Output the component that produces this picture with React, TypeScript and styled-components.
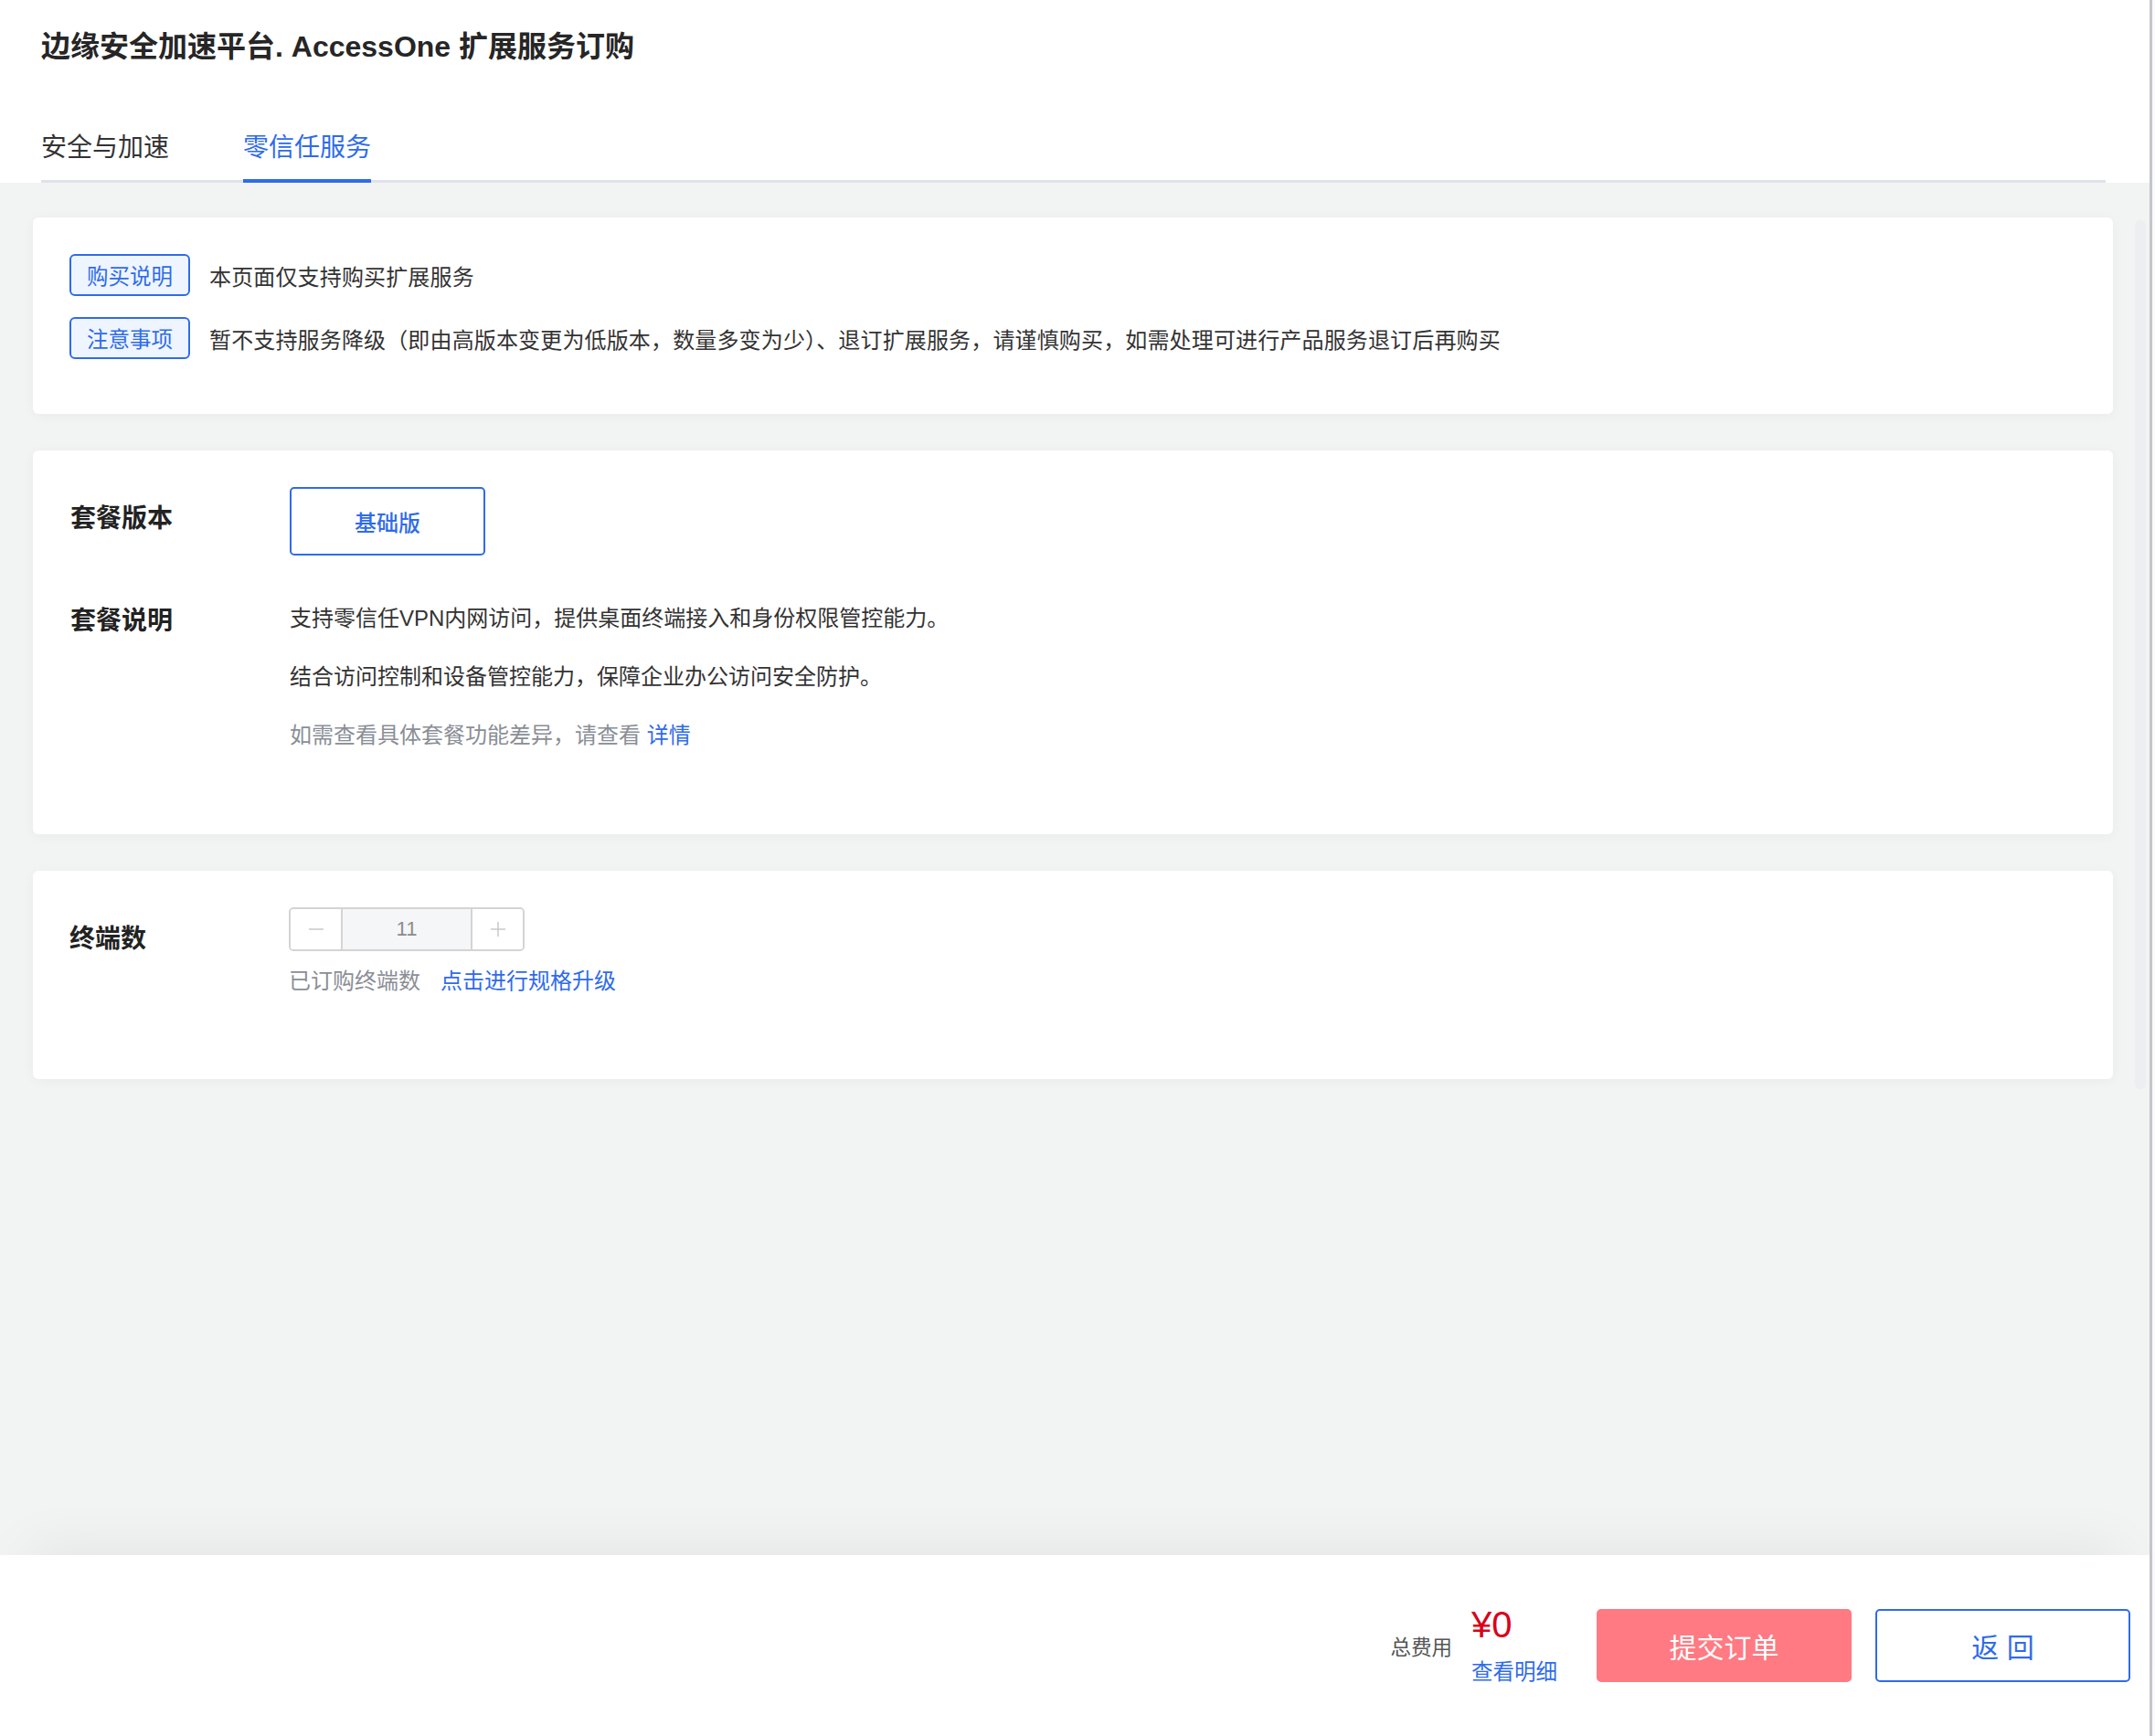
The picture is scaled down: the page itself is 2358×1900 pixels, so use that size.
import React from "react";
import styled, { createGlobalStyle } from "styled-components";

const BLUE = "#2f6bea";

const GlobalStyle = createGlobalStyle`
  body {
    margin: 0;
    background: #ffffff;
    font-family: "Liberation Sans", "Noto Sans CJK SC", sans-serif;
    color: #333333;
  }
`;

const Page = styled.div`
  display: flex;
  min-height: 1900px;
`;

const Main = styled.div`
  position: relative;
  flex: 1;

  display: flex;
  flex-direction: column;
`;

const WindowEdge = styled.div`
  width: 3px;
  border-left: 3px solid #c4c6cb;
  background: #fafafa;
`;

const Header = styled.header`
  background: #ffffff;
  padding: 31px 48px 0 45px;
`;

const Title = styled.h1`
  margin: 0;

  font-size: 32px;
  line-height: 40px;
  font-weight: 700;
  color: #262626;
`;

const TabBar = styled.div`
  margin-top: 71px;

  display: flex;
  gap: 81px;

  border-bottom: 3px solid #dfe2ea;
`;

const Tab = styled.div<{ $active?: boolean }>`
  margin-bottom: -3px;
  padding-bottom: 14px;

  font-size: 28px;
  line-height: 40px;
  color: ${(p) => (p.$active ? BLUE : "#333333")};

  border-bottom: 4px solid ${(p) => (p.$active ? BLUE : "transparent")};
`;

const Content = styled.main`
  flex: 1;
  background: #f2f3f3;

  padding: 38px 40px 0 36px;

  display: flex;
  flex-direction: column;
  gap: 40px;
`;

const Card = styled.section<{ $pad: string }>`
  background: #ffffff;
  border-radius: 6px;
  box-shadow: 0 2px 14px rgba(0, 0, 0, 0.04);

  padding: ${(p) => p.$pad};
`;

const NoticeList = styled.div`
  display: flex;
  flex-direction: column;
  gap: 23px;
`;

const NoticeRow = styled.div`
  display: flex;
  align-items: center;
  gap: 21px;
`;

const Tag = styled.span`
  height: 46px;
  box-sizing: border-box;
  padding: 0 17px;

  display: inline-flex;
  align-items: center;

  font-size: 23.5px;
  color: ${BLUE};
  background: #eef5ff;

  border: 2px solid ${BLUE};
  border-radius: 6px;
`;

const NoticeText = styled.span`
  font-size: 24px;
  letter-spacing: 0.15px;
  color: #333333;
`;

const FieldList = styled.div<{ $gap: number }>`
  display: flex;
  flex-direction: column;
  gap: ${(p) => p.$gap}px;
`;

const FieldRow = styled.div`
  display: grid;
  grid-template-columns: 240px 1fr;
  align-items: start;
`;

const Label = styled.div`
  padding-top: 3px;

  font-size: 28px;
  line-height: 64px;
  font-weight: 700;
  color: #222222;
`;

const VersionButton = styled.button`
  width: 214px;
  height: 75px;

  background: #ffffff;
  border: 2px solid ${BLUE};
  border-radius: 5px;

  font-family: inherit;
  font-size: 24px;
  font-weight: 500;
  color: ${BLUE};
`;

const DescLine = styled.p<{ $muted?: boolean }>`
  margin: 0;

  font-size: 24px;
  line-height: 64px;
  color: ${(p) => (p.$muted ? "#8a8e96" : "#333333")};
`;

const Link = styled.a`
  color: ${BLUE};
  text-decoration: none;
`;

const Stepper = styled.div`
  width: 258px;
  height: 48px;
  box-sizing: border-box;

  display: grid;
  grid-template-columns: 55px 1fr 55px;

  border: 2px solid #d4d4d4;
  border-radius: 5px;
  overflow: hidden;
`;

const StepButton = styled.div`
  display: flex;
  align-items: center;
  justify-content: center;
  background: #ffffff;
`;

const StepValue = styled.div`
  display: flex;
  align-items: center;
  justify-content: center;

  background: #f5f6f7;
  border-left: 2px solid #d4d4d4;
  border-right: 2px solid #d4d4d4;

  font-size: 22px;
  color: #8c8c8c;
`;

const SubLine = styled.div`
  margin-top: 15px;

  font-size: 24px;
  line-height: 36px;
  color: #8a8e96;

  display: flex;
  gap: 22px;
`;

const ScrollThumb = styled.div`
  position: absolute;
  top: 241px;
  right: 4px;

  width: 12px;
  height: 951px;

  background: #eceef1;
  border-radius: 6px;
`;

const Footer = styled.footer`
  position: relative;
  z-index: 1;

  height: 198px;
  background: #ffffff;
  box-shadow: 0 -40px 60px -30px rgba(0, 0, 0, 0.06);

  padding-right: 21px;

  display: flex;
  justify-content: flex-end;
  align-items: center;
`;

const TotalLabel = styled.span`
  margin-right: 21px;

  font-size: 22.5px;
  color: #555555;
`;

const PriceBlock = styled.div`
  margin-right: 43px;

  display: flex;
  flex-direction: column;
  align-items: flex-start;
`;

const Price = styled.span`
  font-size: 40px;
  line-height: 46px;
  color: #d9001b;
`;

const DetailLink = styled.a`
  margin-top: 12px;

  font-size: 23.5px;
  line-height: 34px;
  color: ${BLUE};
  text-decoration: none;
`;

const ActionButton = styled.button<{ $primary?: boolean }>`
  width: 279px;
  height: 80px;
  margin-left: ${(p) => (p.$primary ? "0" : "26px")};

  background: ${(p) => (p.$primary ? "#ff7a82" : "#ffffff")};
  border: 2px solid ${(p) => (p.$primary ? "#ff7a82" : BLUE)};
  border-radius: 5px;

  font-family: inherit;
  font-size: 30px;
  color: ${(p) => (p.$primary ? "#ffffff" : BLUE)};
`;

const MinusIcon = () => (
  <svg width="16" height="16" viewBox="0 0 16 16">
    <line x1="0" y1="8" x2="16" y2="8" stroke="#c8c8c8" strokeWidth="1.5" />
  </svg>
);

const PlusIcon = () => (
  <svg width="16" height="16" viewBox="0 0 16 16">
    <line x1="0" y1="8" x2="16" y2="8" stroke="#c8c8c8" strokeWidth="1.5" />
    <line x1="8" y1="0" x2="8" y2="16" stroke="#c8c8c8" strokeWidth="1.5" />
  </svg>
);

export default function App() {
  return (
    <>
      <GlobalStyle />
      <Page>
        <Main>
          <Header>
            <Title>边缘安全加速平台. AccessOne 扩展服务订购</Title>
            <TabBar>
              <Tab>安全与加速</Tab>
              <Tab $active>零信任服务</Tab>
            </TabBar>
          </Header>

          <Content>
            <Card $pad="40px 40px 60px 40px">
              <NoticeList>
                <NoticeRow>
                  <Tag>购买说明</Tag>
                  <NoticeText>本页面仅支持购买扩展服务</NoticeText>
                </NoticeRow>
                <NoticeRow>
                  <Tag>注意事项</Tag>
                  <NoticeText>
                    暂不支持服务降级（即由高版本变更为低版本，数量多变为少）、退订扩展服务，请谨慎购买，如需处理可进行产品服务退订后再购买
                  </NoticeText>
                </NoticeRow>
              </NoticeList>
            </Card>

            <Card $pad="40px 41px 76px 41px">
              <FieldList $gap={37}>
                <FieldRow>
                  <Label>套餐版本</Label>
                  <div>
                    <VersionButton>基础版</VersionButton>
                  </div>
                </FieldRow>
                <FieldRow>
                  <Label>套餐说明</Label>
                  <div>
                    <DescLine>支持零信任VPN内网访问，提供桌面终端接入和身份权限管控能力。</DescLine>
                    <DescLine>结合访问控制和设备管控能力，保障企业办公访问安全防护。</DescLine>
                    <DescLine $muted>
                      如需查看具体套餐功能差异，请查看 <Link href="#">详情</Link>
                    </DescLine>
                  </div>
                </FieldRow>
              </FieldList>
            </Card>

            <Card $pad="40px 40px 89px 40px">
              <FieldRow>
                <Label>终端数</Label>
                <div>
                  <Stepper>
                    <StepButton>
                      <MinusIcon />
                    </StepButton>
                    <StepValue>11</StepValue>
                    <StepButton>
                      <PlusIcon />
                    </StepButton>
                  </Stepper>
                  <SubLine>
                    <span>已订购终端数</span>
                    <Link href="#">点击进行规格升级</Link>
                  </SubLine>
                </div>
              </FieldRow>
            </Card>
          </Content>

          <Footer>
            <TotalLabel>总费用</TotalLabel>
            <PriceBlock>
              <Price>¥0</Price>
              <DetailLink href="#">查看明细</DetailLink>
            </PriceBlock>
            <ActionButton $primary>提交订单</ActionButton>
            <ActionButton>返 回</ActionButton>
          </Footer>

          <ScrollThumb />
        </Main>
        <WindowEdge />
      </Page>
    </>
  );
}
